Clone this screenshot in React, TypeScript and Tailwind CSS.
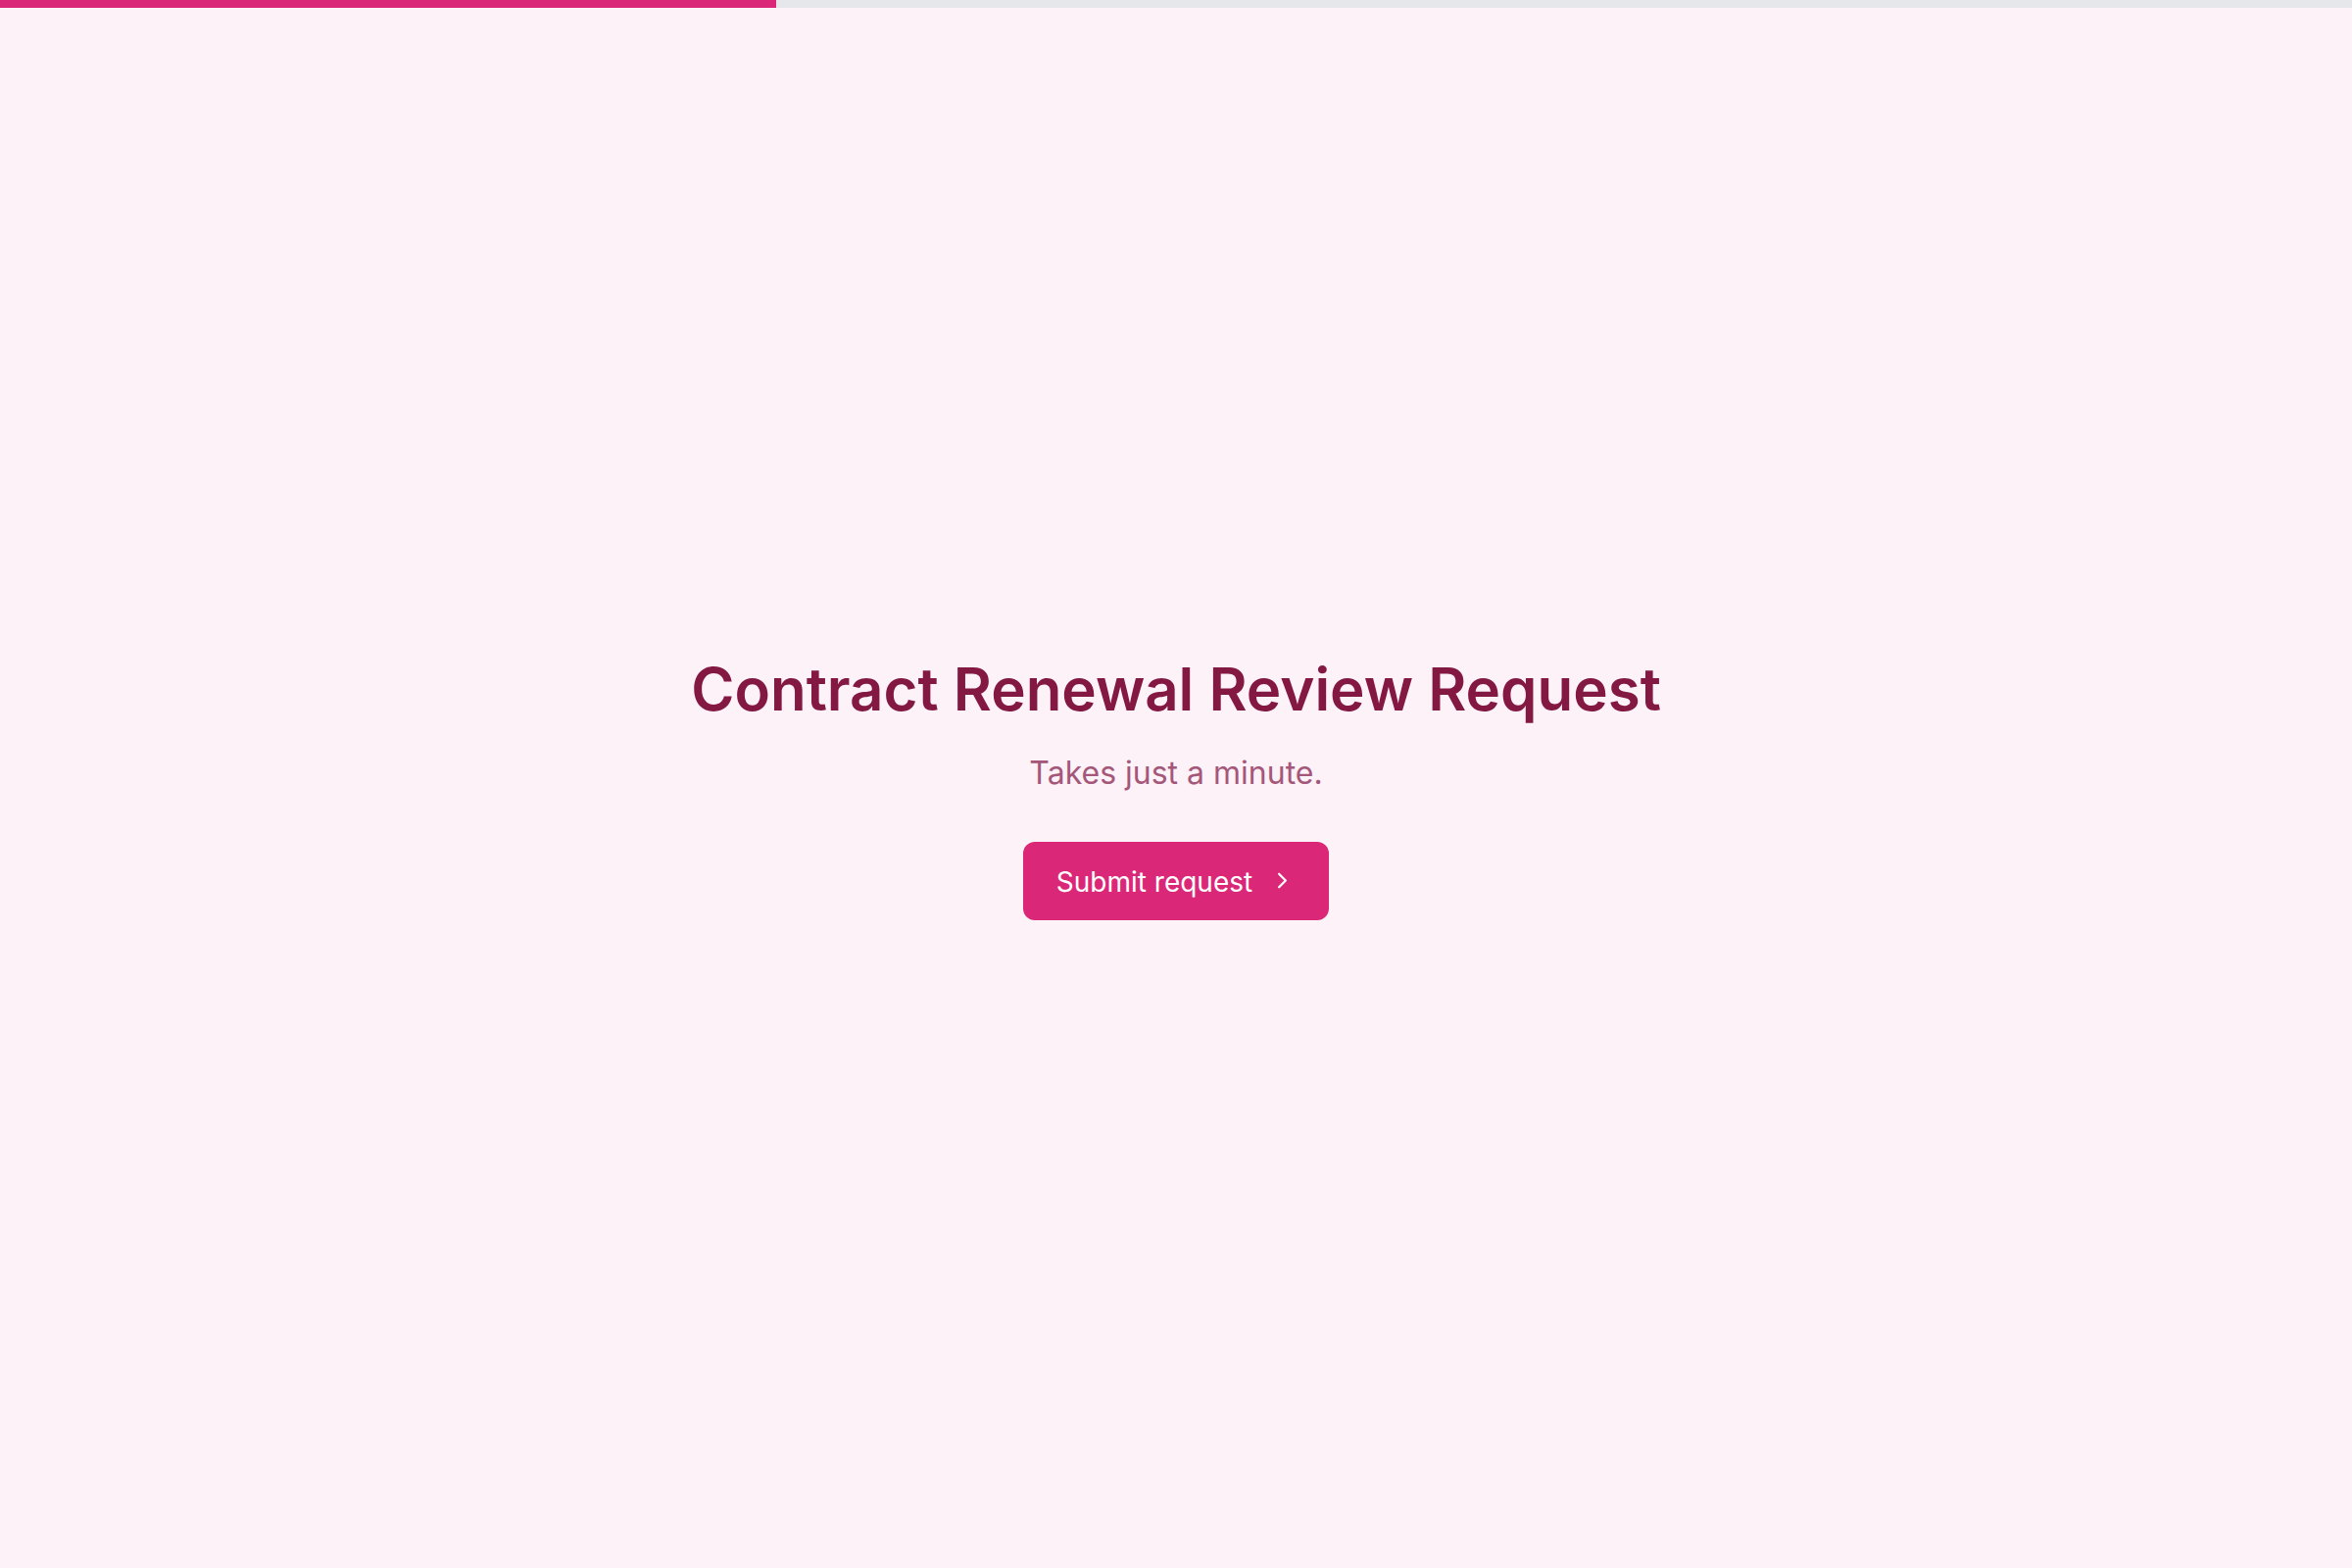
import React from "react";

export default function App() {
  return (
    <div
      className="min-h-screen w-full flex flex-col bg-[#fdf2f8]"
      style={{ fontFamily: "Inter, 'Noto Sans', sans-serif" }}
    >
      <div className="h-2 w-full bg-[#e5e7eb]">
        <div className="h-full w-[792px] bg-[#db2777]" />
      </div>
      <div className="flex-1 flex flex-col items-center justify-center">
        <h1 className="text-[60px] leading-[66px] font-semibold text-[#831843]">
          Contract Renewal Review Request
        </h1>
        <p className="mt-[30px] text-[32px] leading-[46px] text-[#a5577a]">
          Takes just a minute.
        </p>
        <button className="mt-[47px] h-[80px] w-[312px] flex items-center justify-center gap-[17px] rounded-[12px] bg-[#db2777] text-white text-[28px] leading-[42px] font-normal">
          <span className="pt-[2px]">Submit request</span>
          <svg
            width="27"
            height="27"
            viewBox="0 0 24 24"
            fill="none"
            stroke="currentColor"
            strokeWidth="2"
            strokeLinecap="round"
            strokeLinejoin="round"
          >
            <path d="m9 18 6-6-6-6" />
          </svg>
        </button>
      </div>
    </div>
  );
}
